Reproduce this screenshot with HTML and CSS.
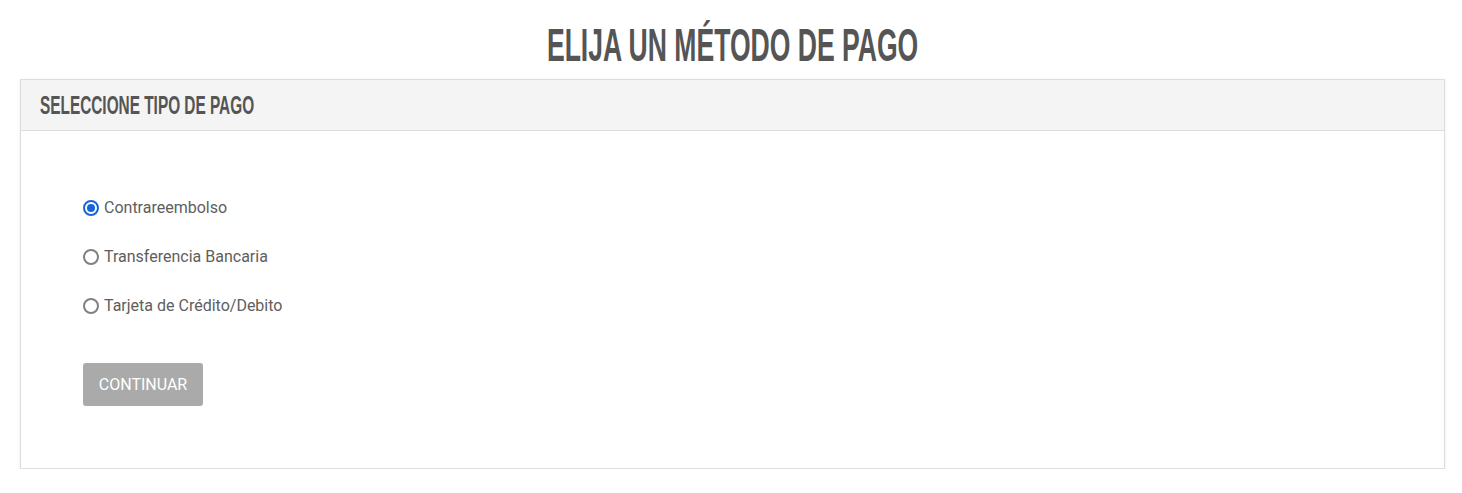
FILE: index.html
```html
<!DOCTYPE html>
<html lang="es">
<head>
<meta charset="utf-8">
<link rel="stylesheet" href="styles.css">
</head>
<body>
<main class="page">
  <h1 class="title"><span class="condensed">ELIJA UN MÉTODO DE PAGO</span></h1>
  <section class="card">
    <header class="card-header">
      <h2 class="card-title"><span class="condensed-sm">SELECCIONE TIPO DE PAGO</span></h2>
    </header>
    <div class="card-body">
      <form class="options">
        <label class="option"><input type="radio" name="pago" checked><span class="radio"></span>Contrareembolso</label>
        <label class="option"><input type="radio" name="pago"><span class="radio"></span>Transferencia Bancaria</label>
        <label class="option"><input type="radio" name="pago"><span class="radio"></span>Tarjeta de Crédito/Debito</label>
      </form>
      <button class="btn" type="button">CONTINUAR</button>
    </div>
  </section>
</main>
</body>
</html>
```

FILE: styles.css
```css
* { box-sizing: border-box; }
html, body { margin: 0; padding: 0; background: #fff; }
body { font-family: Roboto, "Liberation Sans", sans-serif; color: #555; }

.page { padding: 0 17px 0 20px; }

.title {
  margin: 0;
  padding-top: 20px;
  height: 79px;
  text-align: center;
  font-family: "Liberation Sans Narrow", "Liberation Sans", sans-serif;
  font-weight: 700;
  font-size: 47px;
  line-height: 50px;
  color: #555;
}
.condensed { display: inline-block; transform: scaleX(0.565); }

.card {
  border: 1px solid #ddd;
  box-shadow: 0 1px 3px rgba(0,0,0,0.08);
  background: #fff;
}
.card-header {
  height: 51px;
  background: #f4f4f4;
  border-bottom: 1px solid #ddd;
  padding: 0 19px;
  display: flex;
  align-items: center;
}
.card-title {
  margin: 0;
  font-family: "Liberation Sans Narrow", "Liberation Sans", sans-serif;
  font-weight: 700;
  font-size: 25px;
  line-height: 28px;
  color: #555;
}
.condensed-sm { display: inline-block; transform: scaleX(0.615); transform-origin: left center; }

.card-body { padding: 66px 62px 62px; }
.options { display: flex; flex-direction: column; gap: 27px; margin: 0 0 46px; }
.option {
  display: flex;
  align-items: center;
  font-size: 16px;
  line-height: 22px;
  color: #5e5e5e;
  cursor: pointer;
}
.option input { display: none; }
.radio {
  width: 16px; height: 16px;
  border: 2px solid #808080;
  border-radius: 50%;
  margin-right: 5px;
  position: relative;
  flex: none;
  background: #fff;
}
.option input:checked + .radio { border-color: #1565d8; }
.option input:checked + .radio::after {
  content: "";
  position: absolute;
  left: 2px; top: 2px;
  width: 8px; height: 8px;
  border-radius: 50%;
  background: #1565d8;
}
.btn {
  display: block;
  width: 120px; height: 43px;
  background: #aaa;
  color: #fff;
  border: 0;
  border-radius: 3px;
  font-family: Roboto, "Liberation Sans", sans-serif;
  font-size: 16px;
  padding: 0;
}
```
